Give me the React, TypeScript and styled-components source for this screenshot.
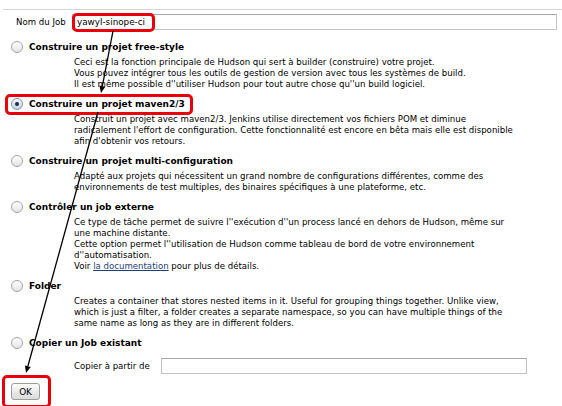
import React from "react";
import styled, { createGlobalStyle, css } from "styled-components";

const Global = createGlobalStyle`
  html, body { margin: 0; padding: 0; background: #fff; }
  body {
    font-family: "DejaVu Sans", Verdana, sans-serif;
    font-size: 8.6px;
    color: #000;
  }
`;

const Page = styled.div`
  position: relative;
  width: 562px;
  height: 406px;
  overflow: hidden;
  padding-top: 9px;
  box-sizing: border-box;
`;

const TopRule = styled.div`
  margin-left: 3px;
  border-top: 1px solid #d6d6d6;
`;

const NameRow = styled.div`
  display: flex;
  align-items: center;
  padding-left: 16px;
  margin-top: 4px;
`;

const FieldLabel = styled.span<{ $w: number }>`
  width: ${(p) => p.$w}px;
  white-space: nowrap;
  flex: none;
`;

const InputWrap = styled.div`
  position: relative;
  display: flex;
`;

const TextInput = styled.input<{ $w: number; $h: number }>`
  box-sizing: border-box;
  width: ${(p) => p.$w}px;
  height: ${(p) => p.$h}px;
  border: 1px solid #c4c4c4;
  border-top-color: #a8a8a8;
  padding: 0 4px;
  margin: 0;
  font-family: "DejaVu Sans", Verdana, sans-serif;
  font-size: 8.8px;
  color: #000;
  background: #fff;
  outline: none;
`;

const Highlight = styled.div<{ $l: number; $t: number; $w: number; $h: number }>`
  position: absolute;
  left: ${(p) => p.$l}px;
  top: ${(p) => p.$t}px;
  width: ${(p) => p.$w}px;
  height: ${(p) => p.$h}px;
  box-sizing: border-box;
  border: 3px solid #e8000b;
  border-radius: 5px;
  pointer-events: none;
`;

const Sections = styled.div`
  display: flex;
  flex-direction: column;
  margin-top: 10px;
`;

const Section = styled.div<{ $gap: number }>`
  display: flex;
  flex-direction: column;
  margin-bottom: ${(p) => p.$gap}px;
`;

const Heading = styled.label`
  position: relative;
  display: flex;
  align-items: center;
  height: 14px;
  padding-left: 11px;
  gap: 6px;
  font-size: 9px;
  font-weight: bold;
  white-space: nowrap;
`;

const Radio = styled.span<{ $checked?: boolean }>`
  position: relative;
  flex: none;
  width: 12px;
  height: 12px;
  box-sizing: border-box;
  border-radius: 50%;
  border: 1px solid #a3a3a3;
  background: linear-gradient(#fefefe, #e4e4e4);
  box-shadow: inset 0 1px 1px rgba(255, 255, 255, 0.9);
  ${(p) =>
    p.$checked &&
    css`
      border-color: #7f8fa6;
      background: linear-gradient(#eef3fa, #c9d6e8);
      &::after {
        content: "";
        position: absolute;
        left: 3px;
        top: 3px;
        width: 4px;
        height: 4px;
        border-radius: 50%;
        background: #1b2a4a;
      }
    `}
`;

const Desc = styled.div`
  padding-left: 74px;
  margin-top: 3px;
  line-height: 11px;
  white-space: nowrap;
`;

const Line = styled.div``;

const DocLink = styled.a`
  color: #1f3f7a;
  text-decoration: underline;
`;

const CopyRow = styled.div`
  display: flex;
  align-items: center;
  padding-left: 74px;
  margin-top: 8px;
`;

const ButtonRow = styled.div`
  display: flex;
  padding-left: 11px;
  margin-top: 9px;
`;

const ButtonWrap = styled.div`
  position: relative;
  display: flex;
`;

const OkButton = styled.button`
  box-sizing: border-box;
  width: 29px;
  height: 17px;
  margin: 0;
  padding: 0;
  border: 1px solid #9c9c9c;
  border-radius: 3px;
  background: linear-gradient(#ffffff, #e6e6e6 60%, #dcdcdc);
  font-family: "DejaVu Sans", Verdana, sans-serif;
  font-size: 8.8px;
  color: #000;
`;

const Arrows = styled.svg`
  position: absolute;
  left: 0;
  top: 0;
  pointer-events: none;
`;

function Arrow({ x1, y1, x2, y2 }: { x1: number; y1: number; x2: number; y2: number }) {
  const ang = Math.atan2(y2 - y1, x2 - x1);
  const len = 7;
  const half = 3;
  const bx = x2 - len * Math.cos(ang);
  const by = y2 - len * Math.sin(ang);
  const px = -Math.sin(ang) * half;
  const py = Math.cos(ang) * half;
  return (
    <g>
      <line x1={x1} y1={y1} x2={bx} y2={by} stroke="#000" strokeWidth={1.3} />
      <polygon points={`${x2},${y2} ${bx + px},${by + py} ${bx - px},${by - py}`} fill="#000" />
    </g>
  );
}

export default function App() {
  return (
    <>
      <Global />
      <Page>
        <TopRule />
        <NameRow>
          <FieldLabel $w={56}>Nom du Job</FieldLabel>
          <InputWrap>
            <TextInput $w={485} $h={16} defaultValue="yawyl-sinope-ci" />
            <Highlight $l={0} $t={-1} $w={83} $h={19} />
          </InputWrap>
        </NameRow>
        <Sections>
          <Section $gap={7}>
            <Heading>
              <Radio />
              Construire un projet free-style
            </Heading>
            <Desc>
              <Line>Ceci est la fonction principale de Hudson qui sert à builder (construire) votre projet.</Line>
              <Line>Vous pouvez intégrer tous les outils de gestion de version avec tous les systèmes de build.</Line>
              <Line>Il est même possible d''utiliser Hudson pour tout autre chose qu''un build logiciel.</Line>
            </Desc>
          </Section>
          <Section $gap={7}>
            <Heading>
              <Radio $checked />
              Construire un projet maven2/3
              <Highlight $l={5} $t={-3} $w={188} $h={21} />
            </Heading>
            <Desc>
              <Line>Construit un projet avec maven2/3. Jenkins utilise directement vos fichiers POM et diminue</Line>
              <Line>radicalement l'effort de configuration. Cette fonctionnalité est encore en bêta mais elle est disponible</Line>
              <Line>afin d'obtenir vos retours.</Line>
            </Desc>
          </Section>
          <Section $gap={7}>
            <Heading>
              <Radio />
              Construire un projet multi-configuration
            </Heading>
            <Desc>
              <Line>Adapté aux projets qui nécessitent un grand nombre de configurations différentes, comme des</Line>
              <Line>environnements de test multiples, des binaires spécifiques à une plateforme, etc.</Line>
            </Desc>
          </Section>
          <Section $gap={7}>
            <Heading>
              <Radio />
              Contrôler un job externe
            </Heading>
            <Desc>
              <Line>Ce type de tâche permet de suivre l''exécution d''un process lancé en dehors de Hudson, même sur</Line>
              <Line>une machine distante.</Line>
              <Line>Cette option permet l''utilisation de Hudson comme tableau de bord de votre environnement</Line>
              <Line>d''automatisation.</Line>
              <Line>
                Voir <DocLink href="#">la documentation</DocLink> pour plus de détails.
              </Line>
            </Desc>
          </Section>
          <Section $gap={7}>
            <Heading>
              <Radio />
              Folder
            </Heading>
            <Desc>
              <Line>Creates a container that stores nested items in it. Useful for grouping things together. Unlike view,</Line>
              <Line>which is just a filter, a folder creates a separate namespace, so you can have multiple things of the</Line>
              <Line>same name as long as they are in different folders.</Line>
            </Desc>
          </Section>
          <Section $gap={0}>
            <Heading>
              <Radio />
              Copier un Job existant
            </Heading>
            <CopyRow>
              <FieldLabel $w={87}>Copier à partir de</FieldLabel>
              <TextInput $w={366} $h={16} />
            </CopyRow>
          </Section>
        </Sections>
        <ButtonRow>
          <ButtonWrap>
            <OkButton>OK</OkButton>
            <Highlight $l={-9} $t={-8} $w={49} $h={33} />
          </ButtonWrap>
        </ButtonRow>
        <Arrows width={562} height={406} viewBox="0 0 562 406">
          <Arrow x1={113} y1={31} x2={101} y2={93} />
          <Arrow x1={98} y1={112} x2={26} y2={373} />
        </Arrows>
      </Page>
    </>
  );
}
